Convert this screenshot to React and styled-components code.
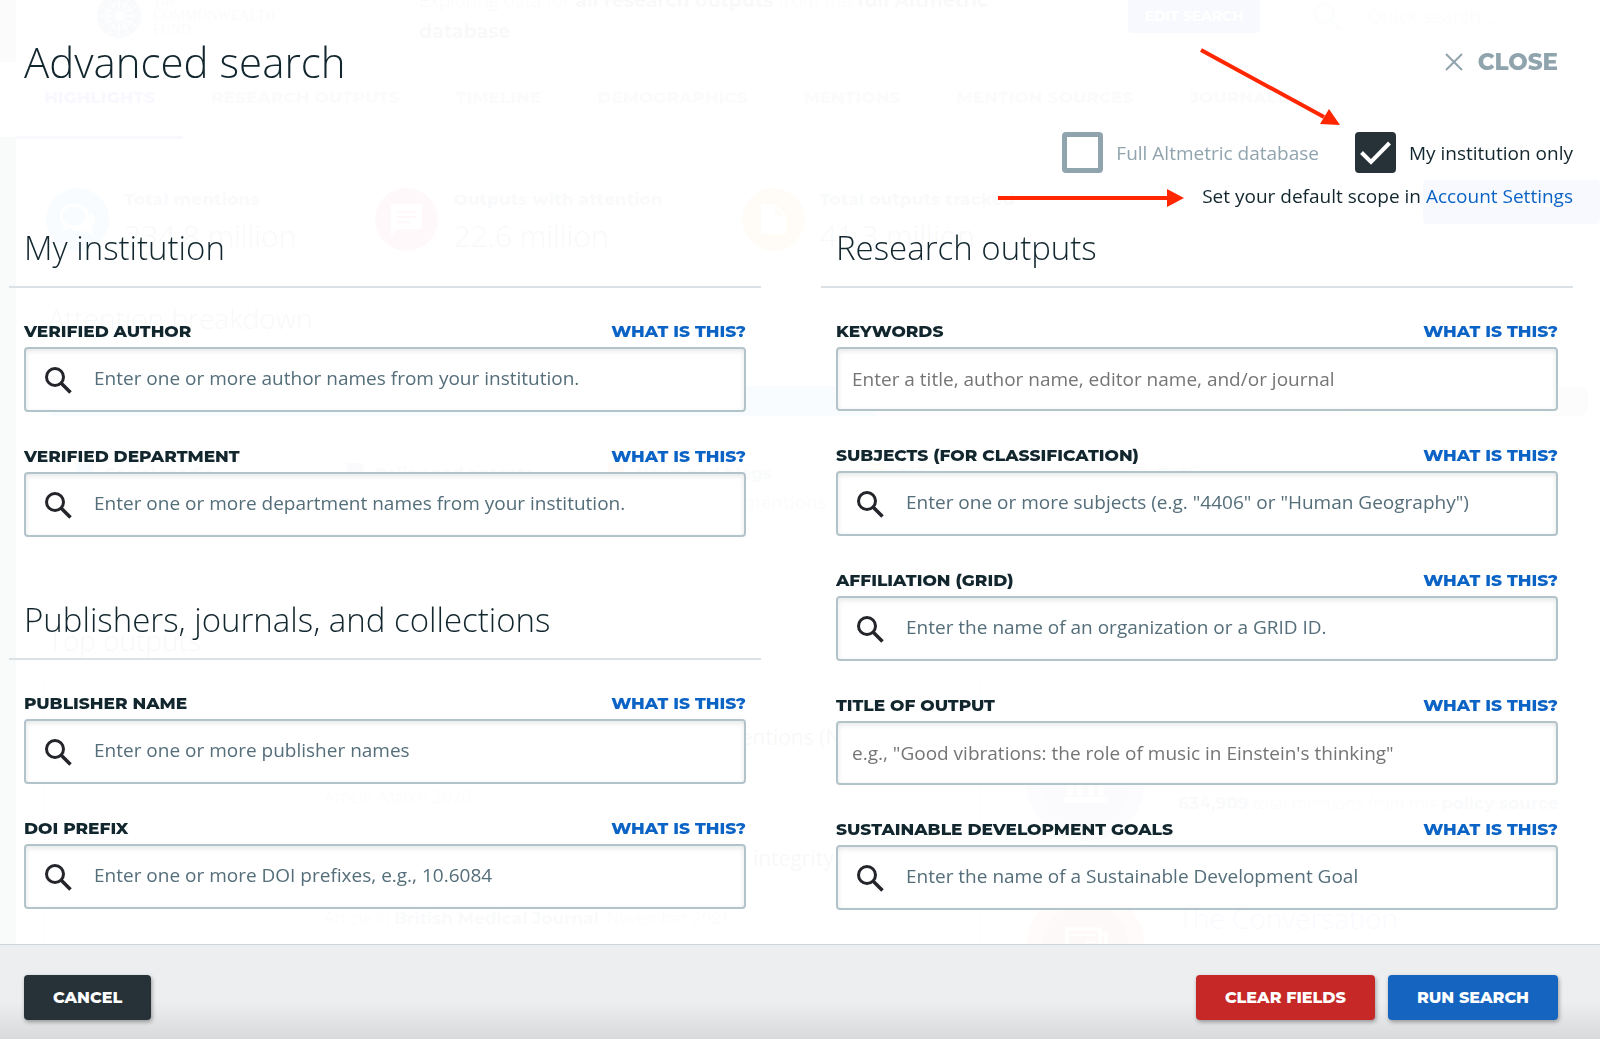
import { useState } from "react";
import styled, { createGlobalStyle } from "styled-components";

const GlobalStyle = createGlobalStyle`
    * {
        box-sizing: border-box;
    }

    body {
        margin: 0;
        background: #fff;
        color: #12262e;
        font: 19px "Open Sans", "Noto Sans", sans-serif;
    }

    h1, h2, h3, p {
        margin: 0;
    }
`;

const heading = `"Montserrat", "Inter", sans-serif`;

/* dashboard page under the search panel */

const Page = styled.div`
    display: flex;
    height: 100vh;
    overflow: hidden;
`;

const Rail = styled.div`
    flex: none;
    width: 16px;
    background: linear-gradient(#766 0 62px, #fff 62px 137px, #1a3c34 137px);
    opacity: 0.8;
`;

const Main = styled.main`
    flex: 1;
    min-width: 0;
`;

const TopBar = styled.header`
    display: grid;
    grid-template-columns: 322px 1fr 132px 340px;
    align-items: center;
    height: 92px;
    margin-top: -30px;
    padding-left: 81px;
`;

const Brand = styled.div`
    display: flex;
    align-items: center;
    gap: 12px;
    color: #667;
    font: 14px/14px "Liberation Serif", serif;
`;

const Exploring = styled.p`
    max-width: 620px;
    font-weight: 300;
    line-height: 30px;
    color: #445;

    b {
        font-family: ${heading};
        font-weight: 700;
    }
`;

const PageButton = styled.button`
    height: ${(p) => (p.$wide ? 44 : 34)}px;
    width: ${(p) => (p.$wide ? "177px" : "auto")};
    margin: ${(p) => (p.$wide ? "-8px 0 0 auto" : "0")};
    border: 0;
    border-radius: 4px;
    background: #1a4fd6;
    color: #fff;
    font: 700 14px ${heading};
`;

const QuickSearch = styled.div`
    display: flex;
    align-items: center;
    gap: 24px;
    padding-left: 52px;
    color: #99a;
`;

const Tabs = styled.nav`
    display: flex;
`;

const Tab = styled.a`
    padding: 25px 28px 29px;
    border-bottom: 3px solid ${(p) => (p.$active ? "#4630e8" : "transparent")};
    color: ${(p) => (p.$active ? "#4630e8" : "#789")};
    font: 800 17px/20px ${heading};
    text-decoration: none;
    white-space: nowrap;
`;

const Stats = styled.div`
    display: flex;
    align-items: flex-start;
    gap: 79px;
    height: 70px;
    margin-top: 49px;
    padding-left: 30px;
`;

const Stat = styled.div`
    display: flex;
    gap: 15px;

    h3 {
        color: #567;
        font: 800 17px/22px ${heading};
        margin-bottom: 6px;
    }

    p {
        font-size: 30px;
        font-weight: 300;
        line-height: 40px;
    }
`;

const PageTitle = styled.h2`
    margin: 40px 0 0 32px;
    font-size: 28px;
    font-weight: 300;
    line-height: 40px;
`;

const Bar = styled.div`
    display: flex;
    height: 30px;
    margin: 48px 12px 0 30px;
    border-radius: 8px;
    overflow: hidden;
`;

const Segment = styled.span`
    flex: ${(p) => p.$share};
    background: ${(p) => p.$color};
`;

const Legend = styled.div`
    display: grid;
    grid-template-columns: 270px repeat(4, 1fr);
    margin: 0 27px;
    padding: 47px 183px 59px 34px;
    border-bottom: 1px solid #ccc;
`;

const LegendItem = styled.div`
    padding-left: 12px;
    border-left: 16px solid ${(p) => p.$color};
    border-image: linear-gradient(${(p) => p.$color} 0 18px, transparent 18px) 1;
    line-height: 35px;
    color: #678;

    h3 {
        font: 800 16px/22px ${heading};
    }
`;

const Lists = styled.div`
    display: grid;
    grid-template-columns: 937px 1fr;
    margin: 21px 0 0 27px;
`;

const OutputList = styled.div`
    padding: 42px 0 0 280px;
    border-left: 1px solid #bbb;

    h3 {
        height: 28px;
        margin-bottom: 34px;
        font-size: 21px;
        font-weight: 400;
        line-height: 28px;
    }

    p {
        margin-bottom: 35px;
        color: #567;
        font-size: 17px;
        font-weight: 300;
        line-height: 24px;
    }

    b {
        font-family: ${heading};
        font-weight: 700;
    }
`;

const SourceList = styled.div`
    padding: 41px 0 0 45px;
    border-left: 1px solid #bbb;
`;

const Source = styled.div`
    display: flex;
    gap: 33px;
    height: 166px;
    padding-right: 50px;

    h3 {
        margin: 12px 0 21px;
        color: #35c;
        font-size: 28px;
        font-weight: 300;
        line-height: 36px;
    }

    p {
        color: #567;
        font-size: 17px;
        font-weight: 300;
        line-height: 24px;
        white-space: nowrap;
    }

    b {
        font-family: ${heading};
        font-weight: 700;
    }
`;

/* search panel */

const Panel = styled.form`
    position: fixed;
    inset: 0;
    display: flex;
    flex-direction: column;
    background: rgba(255, 255, 255, 0.97);
`;

const Body = styled.div`
    flex: 1;
    min-height: 0;
    padding: 33px 27px 0 9px;
`;

const Header = styled.header`
    display: flex;
    justify-content: space-between;
    align-items: center;
    padding: 0 15px;

    h1 {
        font-size: 42px;
        font-weight: 300;
        line-height: 58px;
    }
`;

const CloseButton = styled.button`
    display: flex;
    align-items: center;
    gap: 15px;
    padding: 0;
    border: 0;
    background: none;
    color: #90a4ae;
    font: 800 23px ${heading};
    cursor: pointer;
`;

const Scope = styled.div`
    position: relative;
    display: flex;
    flex-direction: column;
    align-items: flex-end;
    gap: 9px;
    margin: 41px 0 16px;
    line-height: 28px;

    a {
        color: #0b63c5;
        text-decoration: none;
    }
`;

const Arrows = styled.svg`
    position: absolute;
    top: -87px;
    right: 228px;
    pointer-events: none;
`;

const Options = styled.div`
    display: flex;
    gap: 36px;
`;

const Option = styled.label`
    display: flex;
    align-items: center;
    gap: 13px;
    color: ${(p) => (p.$checked ? "#12262e" : "#90a4ae")};
`;

const Tick = styled.span`
    display: grid;

    > * {
        grid-area: 1 / 1;
    }

    svg {
        pointer-events: none;
    }
`;

const Checkbox = styled.input`
    appearance: none;
    width: 41px;
    height: 41px;
    margin: 0;
    border: 5px solid #90a4ae;
    border-radius: 4px;
    background: #fff;

    &:checked {
        border-color: #263238;
        background: #263238;
    }
`;

const Columns = styled.div`
    display: grid;
    grid-template-columns: 1fr 1fr;
    gap: 60px;
`;

const Section = styled.section`
    & + & {
        margin-top: 61px;
    }

    h2 {
        padding: 0 15px 16px;
        border-bottom: 2px solid #dbe2e5;
        font-size: 33px;
        font-weight: 300;
        line-height: 44px;
    }
`;

const Fields = styled.div`
    display: flex;
    flex-direction: column;
    gap: 33px;
    padding: 32px 15px 0;
`;

const FieldHead = styled.div`
    display: flex;
    justify-content: space-between;
    height: 27px;
    font: 800 17px/22px ${heading};

    a {
        color: #0b63c5;
        text-decoration: none;
    }
`;

const InputBox = styled.div`
    display: flex;
    align-items: center;
    gap: 22px;
    height: ${(p) => (p.$plain ? 64 : 65)}px;
    padding: 0 14px 0 ${(p) => (p.$plain ? 14 : 18)}px;
    border: 2px solid #b3c3ca;
    border-radius: 4px;
    background: #fff;
    box-shadow: inset 0 2px 5px rgba(38, 50, 56, 0.12);

    input {
        flex: 1;
        min-width: 0;
        padding: 0 0 ${(p) => (p.$plain ? 0 : 3)}px;
        border: 0;
        outline: 0;
        background: none;
        font: inherit;
        line-height: 28px;
    }

    input::placeholder {
        color: ${(p) => (p.$plain ? "#757575" : "#546e7a")};
    }
`;

const Footer = styled.footer`
    display: flex;
    gap: 13px;
    height: 95px;
    padding: 30px 42px 0 24px;
    border-top: 1px solid #ccd6da;
    background: linear-gradient(#edeef0 60%, #d9dadb);
`;

const Button = styled.button`
    height: 45px;
    padding: 0 29px;
    border: 0;
    border-radius: 4px;
    background: ${(p) => p.$color};
    box-shadow: 1px 2px 4px rgba(0, 0, 0, 0.35);
    color: #fff;
    font: 800 16px ${heading};
    cursor: pointer;

    &:first-child {
        margin-right: auto;
    }
`;

const SearchIcon = ({ size = 28, color = "#23252b" }) => (
    <svg width={size} height={size} viewBox="0 0 28 28" fill="none" stroke={color} aria-hidden="true">
        <circle cx="11" cy="11" r="8.5" strokeWidth="3" />
        <path d="M17 17L26.500 26.500" strokeWidth="3.500" />
    </svg>
);

const Field = ({ id, label, placeholder, plain }) => (
    <div>
        <FieldHead>
            <label htmlFor={id}>{label}</label>
            <a href="#help">WHAT IS THIS?</a>
        </FieldHead>
        <InputBox $plain={plain}>
            {!plain && <SearchIcon />}
            <input id={id} type="text" placeholder={placeholder} />
        </InputBox>
    </div>
);

const institution = [
    { id: "author", label: "VERIFIED AUTHOR", placeholder: "Enter one or more author names from your institution." },
    { id: "department", label: "VERIFIED DEPARTMENT", placeholder: "Enter one or more department names from your institution." },
];

const publishers = [
    { id: "publisher", label: "PUBLISHER NAME", placeholder: "Enter one or more publisher names" },
    { id: "doi", label: "DOI PREFIX", placeholder: "Enter one or more DOI prefixes, e.g., 10.6084" },
];

const outputs = [
    { id: "keywords", label: "KEYWORDS", placeholder: "Enter a title, author name, editor name, and/or journal", plain: true },
    { id: "subjects", label: "SUBJECTS (FOR CLASSIFICATION)", placeholder: 'Enter one or more subjects (e.g. "4406" or "Human Geography")' },
    { id: "affiliation", label: "AFFILIATION (GRID)", placeholder: "Enter the name of an organization or a GRID ID." },
    { id: "title", label: "TITLE OF OUTPUT", placeholder: 'e.g., "Good vibrations: the role of music in Einstein\'s thinking"', plain: true },
    { id: "sdg", label: "SUSTAINABLE DEVELOPMENT GOALS", placeholder: "Enter the name of a Sustainable Development Goal" },
];

const FieldSection = ({ title, fields }) => (
    <Section>
        <h2>{title}</h2>
        <Fields>
            {fields.map((field) => <Field key={field.id} {...field} />)}
        </Fields>
    </Section>
);

const ScopeOption = ({ label, checked, onChange }) => (
    <Option $checked={checked}>
        <Tick>
            <Checkbox type="checkbox" checked={checked} onChange={onChange} />
            {checked && (
                <svg width="41" height="41" fill="none" stroke="#fff" strokeWidth="4">
                    <path d="M6.500 20.500L16 30L34.500 11" />
                </svg>
            )}
        </Tick>
        {label}
    </Option>
);

const tabs = ["HIGHLIGHTS", "RESEARCH OUTPUTS", "TIMELINE", "DEMOGRAPHICS", "MENTIONS", "MENTION SOURCES", "JOURNALS"];

const petals = [0, 30, 60, 90, 120, 150, 180, 210, 240, 270, 300, 330];

const Dashboard = () => (
    <Page aria-hidden="true" inert>
        <Rail />
        <Main>
            <TopBar>
                <Brand>
                    <svg width="44" height="44" viewBox="-22 -22 44 44">
                        <circle r="22" fill="#3f5a9d" />
                        {petals.map((angle) => (
                            <g key={angle} transform={`rotate(${angle})`} stroke="#fff" fill="none">
                                <path d="M0 -4V-17M-3 -14L0 -10L3 -14" />
                                <circle cy="-19" r="1" />
                            </g>
                        ))}
                        <circle r="4" fill="#fff" />
                    </svg>
                    <span>The<br />COMMONWEALTH<br />FUND</span>
                </Brand>
                <Exploring>
                    Exploring data for <b>all research outputs</b> from the <b>full Altmetric database</b>
                </Exploring>
                <PageButton type="button">EDIT SEARCH</PageButton>
                <QuickSearch>
                    <SearchIcon size={31} color="#abb" />
                    Quick search...
                </QuickSearch>
            </TopBar>
            <Tabs>
                {tabs.map((tab, i) => <Tab key={tab} href="#tab" $active={i === 0}>{tab}</Tab>)}
            </Tabs>
            <Stats>
                <Stat>
                    <svg width="63" height="63" fill="#fff">
                        <circle cx="31.500" cy="31.500" r="31.500" fill="#1e9bf0" />
                        <path d="M44 24c7 5 6 12 1 16l3 8l-9-5c-6 1-11 0-14-3c10 0 18-5 19-16z" />
                        <ellipse cx="28" cy="28" rx="13" ry="11" fill="none" stroke="#fff" strokeWidth="3" />
                        <path d="M19 35l-3 9l10-5z" />
                    </svg>
                    <div><h3>Total mentions</h3><p>234.8 million</p></div>
                </Stat>
                <Stat>
                    <svg width="63" height="63">
                        <circle cx="31.500" cy="31.500" r="31.500" fill="#f0245e" />
                        <path d="M16 16H47V41H23L16 48Z" fill="#fff" />
                        <path d="M22 24H41M22 29H41M22 34H35" stroke="#f0245e" strokeWidth="2" />
                    </svg>
                    <div><h3>Outputs with attention</h3><p>22.6 million</p></div>
                </Stat>
                <Stat>
                    <svg width="63" height="63">
                        <circle cx="31.500" cy="31.500" r="31.500" fill="#ffa726" />
                        <path d="M19 16H33L44 27V46H19Z" fill="#fff" />
                        <path d="M33 19V27H41Z" fill="#ffa726" />
                    </svg>
                    <div><h3>Total outputs tracked</h3><p>41.3 million</p></div>
                </Stat>
                <PageButton type="button" $wide>SAVE SEARCH</PageButton>
            </Stats>
            <PageTitle>Attention breakdown</PageTitle>
            <Bar>
                <Segment $share={830} $color="#2196f3" />
                <Segment $share={470} $color="#c9a0c8" />
                <Segment $share={200} $color="#ddd8b0" />
                <Segment $share={43} $color="#999" />
            </Bar>
            <Legend>
                <LegendItem $color="#2196f3"><h3>Social media</h3>mentions</LegendItem>
                <LegendItem $color="#7e57c2"><h3>Policy and patents</h3>mentions</LegendItem>
                <LegendItem $color="#e53935"><h3>News and blogs</h3>17.1 million mentions</LegendItem>
                <LegendItem $color="#ffca28"><h3>Other</h3>mentions</LegendItem>
                <LegendItem $color="#999"><h3>Data</h3></LegendItem>
            </Legend>
            <PageTitle>Top outputs</PageTitle>
            <Lists>
                <OutputList>
                    <h3>Effectiveness of non-pharmaceutical interventions (NPIs)</h3>
                    <p>Article, March 2020</p>
                    <h3>Covid-19: Researcher blows whistle on data integrity issues</h3>
                    <p>Article in <b>British Medical Journal</b>, November 2021</p>
                </OutputList>
                <SourceList>
                    <Source>
                        <svg width="119" height="119">
                            <circle cx="59.500" cy="59.500" r="59.500" fill="#9aa3c8" />
                            <circle cx="59.500" cy="59.500" r="44" fill="#7783b0" />
                            <path d="M38 78H82M44 50V74M54 50V74M65 50V74M75 50V74M38 46L60 34L82 46Z" stroke="#fff" strokeWidth="6" fill="#fff" />
                        </svg>
                        <div>
                            <h3>Policy documents</h3>
                            <p><b>634,909</b> total mentions from this <b>policy source</b></p>
                        </div>
                    </Source>
                    <Source>
                        <svg width="119" height="119">
                            <circle cx="59.500" cy="59.500" r="59.500" fill="#f28080" />
                            <circle cx="59.500" cy="59.500" r="44" fill="#e04545" />
                            <path d="M41 41H74V72H41ZM74 46H80V72H74" stroke="#fff" strokeWidth="3" fill="none" />
                            <path d="M45 47H70M45 57H56V68H45ZM60 54H70M60 60H70M60 66H70" stroke="#fff" strokeWidth="2" fill="#fff" />
                        </svg>
                        <div><h3>The Conversation</h3></div>
                    </Source>
                </SourceList>
            </Lists>
        </Main>
    </Page>
);

const App = () => {
    const [scope, setScope] = useState("institution");

    return (
        <>
            <GlobalStyle />
            <Dashboard />
            <Panel onSubmit={(e) => e.preventDefault()}>
                <Body>
                    <Header>
                        <h1>Advanced search</h1>
                        <CloseButton type="button">
                            <svg width="18" height="18" stroke="currentColor" strokeWidth="2">
                                <path d="M1 1L17 17M17 1L1 17" />
                            </svg>
                            CLOSE
                        </CloseButton>
                    </Header>
                    <Scope>
                        <Options>
                            <ScopeOption
                                label="Full Altmetric database"
                                checked={scope === "full"}
                                onChange={() => setScope("full")}
                            />
                            <ScopeOption
                                label="My institution only"
                                checked={scope === "institution"}
                                onChange={() => setScope("institution")}
                            />
                        </Options>
                        <p>Set your default scope in <a href="#settings">Account Settings</a></p>
                        <Arrows width="347" height="167" fill="#ff2600" stroke="#ff2600" aria-hidden="true">
                            <path d="M203 5L326 72M0 153H170" strokeWidth="4" />
                            <path d="M322 79L331 64L342 80ZM169 144V162L186 153Z" stroke="none" />
                        </Arrows>
                    </Scope>
                    <Columns>
                        <div>
                            <FieldSection title="My institution" fields={institution} />
                            <FieldSection title="Publishers, journals, and collections" fields={publishers} />
                        </div>
                        <FieldSection title="Research outputs" fields={outputs} />
                    </Columns>
                </Body>
                <Footer>
                    <Button type="button" $color="#263238">CANCEL</Button>
                    <Button type="reset" $color="#c62828">CLEAR FIELDS</Button>
                    <Button type="submit" $color="#1565c0">RUN SEARCH</Button>
                </Footer>
            </Panel>
        </>
    );
};

export default App;
